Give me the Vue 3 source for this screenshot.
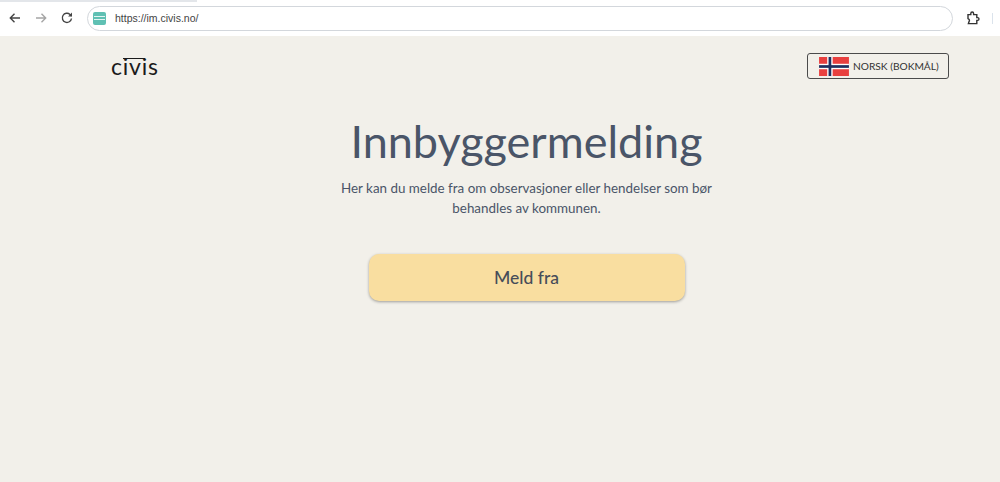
<script setup>
const title = 'Innbyggermelding';
const url = 'https://im.civis.no/';
</script>

<template>
  <div class="page">
    <div class="tabstrip"></div>
    <div class="toolbar">
      <svg class="nav" width="14" height="14" viewBox="0 0 14 14" fill="none" stroke="#444" stroke-width="1.4">
        <path d="M12 7H2.5M6.5 2.8 2.3 7l4.2 4.2" />
      </svg>
      <svg class="nav" width="14" height="14" viewBox="0 0 14 14" fill="none" stroke="#a5a5a5" stroke-width="1.4">
        <path d="M2 7h9.5M7.5 2.8 11.7 7l-4.2 4.2" />
      </svg>
      <svg class="nav" width="14" height="14" viewBox="0 0 14 14" fill="none" stroke="#444" stroke-width="1.4">
        <path d="M11.5 7.5A4.6 4.6 0 1 1 10 3.4L11.6 5" />
        <path d="M12 1.6v3.9H8.1" fill="#444" stroke="none" />
      </svg>
      <div class="address">
        <span class="favicon"><i></i><i></i></span>
        <span class="url">{{ url }}</span>
      </div>
      <svg class="ext" width="16" height="16" viewBox="0 0 16 16" fill="none" stroke="#333" stroke-width="1.4">
        <path d="M3 4.6h2.8V3.4a1.4 1.4 0 0 1 2.8 0v1.2h3.2v3h.8a1.4 1.4 0 0 1 0 2.8h-.8v3.2H3.4l.7-2.2a1.5 1.5 0 0 0-.3-2.2L3 8.6z" />
      </svg>
      <span class="divider"></span>
    </div>

    <div class="content">
      <header class="head">
        <span class="logo">civis</span>
        <button class="lang">
          <svg width="30" height="19" viewBox="0 0 22 14">
            <rect width="22" height="14" fill="#e8403f" />
            <rect x="6" width="4" height="14" fill="#fff" />
            <rect y="5" width="22" height="4" fill="#fff" />
            <rect x="7" width="2" height="14" fill="#1d2f5f" />
            <rect y="6" width="22" height="2" fill="#1d2f5f" />
          </svg>
          <span>NORSK (BOKMÅL)</span>
        </button>
      </header>

      <main class="hero">
        <h1>{{ title }}</h1>
        <p>Her kan du melde fra om observasjoner eller hendelser som bør<br />behandles av kommunen.</p>
        <button class="cta">Meld fra</button>
      </main>
    </div>
  </div>
</template>

<style>
html, body {
  margin: 0;
  background: #f2f0ea;
}
</style>

<style scoped>
.page {
  height: 482px;
  overflow: hidden;
  background: #f2f0ea;
  font-family: Lato, "Noto Sans", sans-serif;
  color: #4a5568;
}

.tabstrip {
  height: 2px;
  background: linear-gradient(to right, #e3e6ea 0, #e3e6ea 197px, #fff 197px);
}

.toolbar {
  height: 34px;
  box-sizing: border-box;
  background: #fff;
  display: flex;
  align-items: center;
  padding: 0 0 2px 8px;
}

.nav {
  flex: none;
  margin-right: 12px;
}

.address {
  width: 866px;
  height: 25px;
  margin-left: 1px;
  box-sizing: border-box;
  border: 1px solid #d3d7dc;
  border-radius: 13px;
  display: flex;
  align-items: center;
  padding-left: 5px;
  gap: 9px;
}

.favicon {
  width: 11px;
  height: 11px;
  padding: 1px;
  border-radius: 2px;
  background: #5fc0b3;
  display: flex;
  flex-direction: column;
  justify-content: center;
  gap: 2px;
}

.favicon i {
  height: 1px;
  background: #e3f5f2;
}

.url {
  font-family: "Liberation Sans", sans-serif;
  font-size: 10.5px;
  color: #444;
}

.ext {
  margin-left: 12px;
}

.divider {
  width: 1px;
  height: 11px;
  margin-left: 11px;
  background: #dbe3ec;
}

.content {
  padding: 0 51px 0 111px;
}

.head {
  display: flex;
  justify-content: space-between;
  align-items: center;
  height: 60px;
}

.logo {
  position: relative;
  font-size: 23px;
  line-height: 1;
  letter-spacing: 0.8px;
  color: #1b1b1b;
}

.logo::before {
  content: '';
  position: absolute;
  left: 12px;
  top: 3px;
  width: 22px;
  height: 1.5px;
  background: #1b1b1b;
}

.lang {
  width: 142px;
  height: 26px;
  padding: 0 0 0 11px;
  display: flex;
  align-items: center;
  gap: 4px;
  border: 1px solid #4b4b4b;
  border-radius: 3px;
  background: transparent;
  font-family: inherit;
  font-size: 10.2px;
  color: #333;
}

.hero {
  margin-left: -111px;
  margin-right: -51px;
  padding-left: 53px;
  display: flex;
  flex-direction: column;
  align-items: center;
  text-align: center;
}

h1 {
  margin: 14px 0 0;
  font-size: 45px;
  line-height: 62px;
  font-weight: 400;
  white-space: nowrap;
}

p {
  margin: 6px 0 0;
  font-size: 13.4px;
  line-height: 20px;
}

.cta {
  width: 316px;
  height: 47px;
  margin-top: 36px;
  border: 0;
  border-radius: 10px;
  background: #f9dea0;
  box-shadow: 0 1px 3px rgba(0, 0, 0, 0.35);
  font-family: inherit;
  font-size: 17.5px;
  font-weight: 500;
  color: #474d59;
}
</style>
